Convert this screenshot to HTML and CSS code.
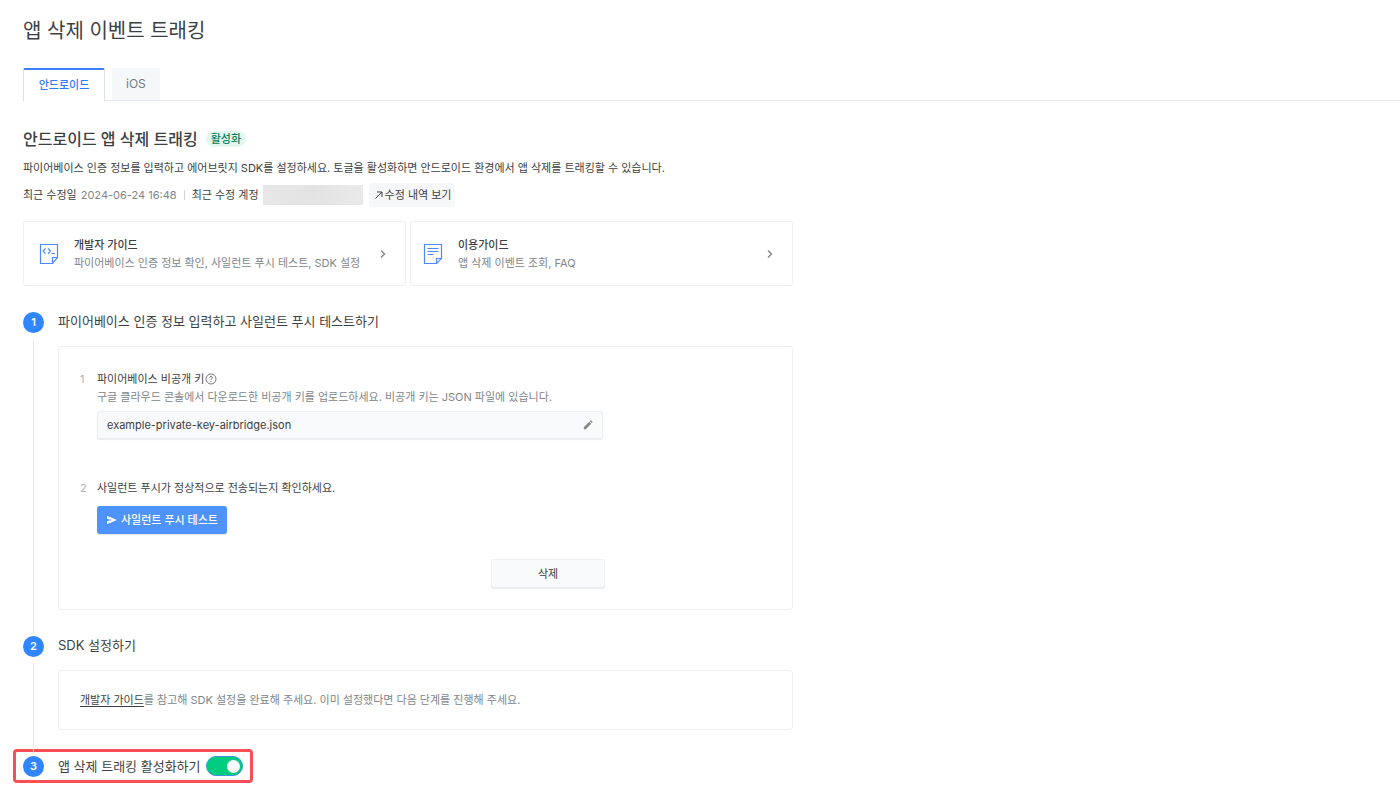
FILE: index.html
```html
<!DOCTYPE html>
<html lang="ko">
<head>
<meta charset="utf-8">
<title>앱 삭제 이벤트 트래킹</title>
<link rel="stylesheet" href="styles.css">
</head>
<body>
<header class="page-header">
  <h1 class="page-title">앱 삭제 이벤트 트래킹</h1>
  <nav class="tabs" role="tablist">
    <button class="tab tab-active" type="button" role="tab" aria-selected="true">안드로이드</button>
    <button class="tab" type="button" role="tab" aria-selected="false">iOS</button>
  </nav>
</header>
<main class="content">
  <div class="heading-row">
    <h2 class="heading">안드로이드 앱 삭제 트래킹</h2>
    <span class="badge">활성화</span>
  </div>
  <p class="description">파이어베이스 인증 정보를 입력하고 에어브릿지 SDK를 설정하세요. 토글을 활성화하면 안드로이드 환경에서 앱 삭제를 트래킹할 수 있습니다.</p>
  <div class="meta">
    <span>최근 수정일</span>
    <time class="meta-date">2024-06-24 16:48</time>
    <span class="meta-divider"></span>
    <span>최근 수정 계정</span>
    <span class="account"></span>
    <button class="history" type="button">
      <svg width="8" height="8" viewBox="0 0 8 8" fill="none" stroke="currentColor"><path d="M.5 7.500 7 1M2 1h5v5"/></svg>
      수정 내역 보기
    </button>
  </div>
  <div class="guides">
    <a class="guide" href="#developer">
      <svg class="guide-icon" width="20" height="22" viewBox="0 0 20 22" fill="none" stroke="currentColor" stroke-width="1.200"><path d="M1.500 1.500h17v13l-5 6h-12zM13.500 20.500v-6h5M6.500 5.500 4 8l2.500 2.500M9 5.500 11.500 8 9 10.500M12.500 10.500H16"/></svg>
      <span class="guide-text">
        <strong class="guide-title">개발자 가이드</strong>
        <span>파이어베이스 인증 정보 확인, 사일런트 푸시 테스트, SDK 설정</span>
      </span>
      <svg class="chevron" width="8" height="10" viewBox="0 0 8 10" fill="none" stroke="currentColor" stroke-width="1.400"><path d="m2 1.500 3.500 3.500L2 8.500"/></svg>
    </a>
    <a class="guide guide-usage" href="#usage">
      <svg class="guide-icon" width="20" height="22" viewBox="0 0 20 22" fill="none" stroke="currentColor" stroke-width="1.200"><path d="M1.500 1.500h17v14l-5 5h-12zM13.500 20.500v-5h5M4.500 5.500h11M4.500 8.500h11M4.500 11.500h6"/></svg>
      <span class="guide-text">
        <strong class="guide-title">이용가이드</strong>
        <span>앱 삭제 이벤트 조회, FAQ</span>
      </span>
      <svg class="chevron" width="8" height="10" viewBox="0 0 8 10" fill="none" stroke="currentColor" stroke-width="1.400"><path d="m2 1.500 3.500 3.500L2 8.500"/></svg>
    </a>
  </div>
  <ol class="steps">
    <li class="step">
      <div class="rail"><span class="step-number">1</span></div>
      <div class="step-body">
        <h3 class="step-title">파이어베이스 인증 정보 입력하고 사일런트 푸시 테스트하기</h3>
        <section class="panel panel-form">
          <div class="task">
            <span class="task-number">1</span>
            <div class="task-body">
              <label class="task-title" for="key">파이어베이스 비공개 키
                <svg width="12" height="12" viewBox="0 0 12 12" fill="none" stroke="#74797e"><circle cx="6" cy="6" r="5"/><path d="M4.500 4.800C4.500 3 7.500 3 7.500 4.800 7.500 5.700 6 5.800 6 7M6 8v1"/></svg>
              </label>
              <p class="hint">구글 클라우드 콘솔에서 다운로드한 비공개 키를 업로드하세요. 비공개 키는 JSON 파일에 있습니다.</p>
              <div class="file-field">
                <input class="file-name" id="key" type="text" value="example-private-key-airbridge.json" readonly>
                <button class="edit" type="button" aria-label="수정">
                  <svg width="10" height="10" viewBox="0 0 10 10" fill="currentColor"><path d="M.8 7.300 6.300 1.800l1.900 1.900-5.500 5.500H.8zM6.900 1.200l.6-.6q.4-.4.800 0l1.100 1.100q.4.400 0 .8l-.6.600z"/></svg>
                </button>
              </div>
            </div>
          </div>
          <div class="task">
            <span class="task-number">2</span>
            <div class="task-body">
              <p class="task-title">사일런트 푸시가 정상적으로 전송되는지 확인하세요.</p>
              <button class="send" type="button">
                <svg width="10" height="10" viewBox="0 0 10 10" fill="currentColor"><path d="M0 .8 10 5 0 9.200V6l5.500-1L0 4z"/></svg>
                사일런트 푸시 테스트
              </button>
            </div>
          </div>
          <button class="delete" type="button">삭제</button>
        </section>
      </div>
    </li>
    <li class="step">
      <div class="rail"><span class="step-number">2</span></div>
      <div class="step-body">
        <h3 class="step-title">SDK 설정하기</h3>
        <p class="panel panel-note"><a class="note-link" href="#developer">개발자 가이드</a>를 참고해 SDK 설정을 완료해 주세요. 이미 설정했다면 다음 단계를 진행해 주세요.</p>
      </div>
    </li>
    <li class="step step-highlight">
      <span class="step-number">3</span>
      <label class="step-title" for="tracking">앱 삭제 트래킹 활성화하기</label>
      <input class="switch" id="tracking" type="checkbox" role="switch" checked>
    </li>
  </ol>
</main>
</body>
</html>
```
FILE: styles.css
```css
* { box-sizing: border-box; }
body {
  margin: 0;
  background: #fff;
  color: #3c3f43;
  font: 11px/18px Inter, "Noto Sans CJK KR", sans-serif;
}
h1, h2, h3, p, ol { margin: 0; padding: 0; }
button, input { font: inherit; color: inherit; }
svg { display: block; flex: none; }

.page-title {
  padding: 16px 23px 0;
  font-family: "Noto Sans CJK KR", sans-serif;
  font-size: 20px;
  line-height: 28px;
  font-weight: 400;
}
.tabs {
  display: flex;
  gap: 7px;
  margin: 24px 0 0 23px;
  height: 33px;
  border-bottom: 1px solid #e4e7ef;
}
.tab {
  height: 32px;
  padding: 0 14px;
  border: 0;
  border-radius: 2px 2px 0 0;
  background: #f6f7f9;
  color: #74797e;
  font-size: 12px;
}
.tab-active {
  min-width: 82px;
  height: 33px;
  padding: 0 14px 2px;
  border: 1px solid #dde1ea;
  border-top: 2px solid #397fff;
  border-bottom: 0;
  background: #fff;
  color: #2d7bff;
  font-size: 11px;
  font-weight: 500;
}

.content { max-width: 816px; padding: 26px 23px 16px; }
.heading-row { display: flex; align-items: center; gap: 8px; }
.heading { font-size: 16px; line-height: 24px; font-weight: 500; }
.badge {
  padding: 0 5px;
  border-radius: 8px;
  background: #e2f8ee;
  color: #087f59;
  line-height: 16px;
  font-weight: 500;
}
.description { margin-top: 8px; }
.meta { display: flex; align-items: center; margin-top: 6px; height: 24px; }
.meta-date { margin-left: 4px; color: #80868b; }
.meta-divider { width: 1px; height: 10px; margin: 0 7px; background: #d0d3d7; }
.account {
  width: 100px;
  height: 20px;
  margin: 0 6px 0 4px;
  background: linear-gradient(90deg, #e7e7e7, #e3e3e3 50%, #e9e9e9);
}
.history {
  display: flex;
  align-items: center;
  gap: 2px;
  height: 24px;
  padding: 0 4px 0 6px;
  border: 0;
  border-radius: 3px;
  background: #f6f7f9;
}

.guides { display: grid; grid-template-columns: 1fr 1fr; gap: 4px; margin-top: 14px; }
.guide {
  display: flex;
  align-items: center;
  height: 65px;
  padding: 0 18px 0 15px;
  border: 1px solid #eeeff1;
  border-radius: 3px;
  color: #80868b;
  text-decoration: none;
}
.guide-usage { padding-left: 12px; }
.guide-icon { color: #5086f5; }
.guide-text { display: flex; flex-direction: column; flex: 1; margin-left: 15px; }
.guide-title { color: #3c3f43; font-weight: 500; }

.steps { margin-top: 24px; list-style: none; }
.step { display: flex; gap: 14px; }
.rail { display: flex; flex-direction: column; align-items: center; gap: 6px; width: 21px; }
.rail::after { content: ""; flex: 1; width: 1px; background: #e7e8eb; }
.step-number {
  flex: none;
  width: 21px;
  height: 21px;
  margin-top: 2px;
  border-radius: 50%;
  background: #2f86ff;
  color: #fff;
  font-weight: 600;
  line-height: 21px;
  text-align: center;
}
.step-body { flex: 1; padding-bottom: 24px; }
.step-title { font-size: 13px; line-height: 22px; font-weight: 400; }
.panel { margin-top: 14px; border: 1px solid #eeeff1; border-radius: 3px; }
.panel-form {
  display: flex;
  flex-direction: column;
  gap: 40px;
  padding: 23px 21px 21px;
}
.task { display: flex; gap: 10px; }
.task-number { width: 7px; color: #abb0b5; }
.task-body { flex: 1; max-width: 506px; }
.task-title { display: flex; align-items: center; gap: 1px; }
.hint { color: #80868b; }
.file-field {
  display: flex;
  align-items: center;
  height: 28px;
  margin-top: 5px;
  padding: 0 9px;
  border: 1px solid #eceef1;
  border-radius: 3px;
  background: #f9fafc;
  box-shadow: 0 1px 1px #e9ebee;
}
.file-name { flex: 1; min-width: 0; padding: 0; border: 0; outline: 0; background: none; }
.edit { padding: 0; border: 0; background: none; color: #80868b; }
.send {
  display: flex;
  align-items: center;
  gap: 4px;
  height: 28px;
  margin-top: 9px;
  padding: 0 9px 0 10px;
  border: 0;
  border-radius: 3px;
  background: #4d93fb;
  box-shadow: 0 1px 1px #dce4f1;
  color: #fff;
  font-weight: 500;
}
.delete {
  width: 114px;
  height: 29px;
  margin: -15px 0 0 411px;
  border: 1px solid #eceef1;
  border-radius: 2px;
  background: #f9fafc;
  box-shadow: 0 1px 1px #e9ebee;
}
.panel-note { padding: 20px 21px; color: #80868b; }
.note-link { color: #3c3f43; text-underline-offset: 2px; }
.step-highlight {
  align-items: center;
  width: fit-content;
  height: 34px;
  margin: -5px 0 0 -10px;
  padding: 0 7px;
  border: 3px solid #f94e54;
  border-radius: 4px;
}
.step-highlight .step-number { margin-top: 0; }
.switch {
  appearance: none;
  display: flex;
  align-items: center;
  justify-content: flex-end;
  width: 37px;
  height: 20px;
  margin: 0 0 0 -9px;
  padding: 0 2px;
  border: 1px solid #3c94df;
  border-radius: 10px;
  background: #00cc80;
}
.switch::before { content: ""; width: 13px; height: 13px; border-radius: 50%; background: #fff; }
```
